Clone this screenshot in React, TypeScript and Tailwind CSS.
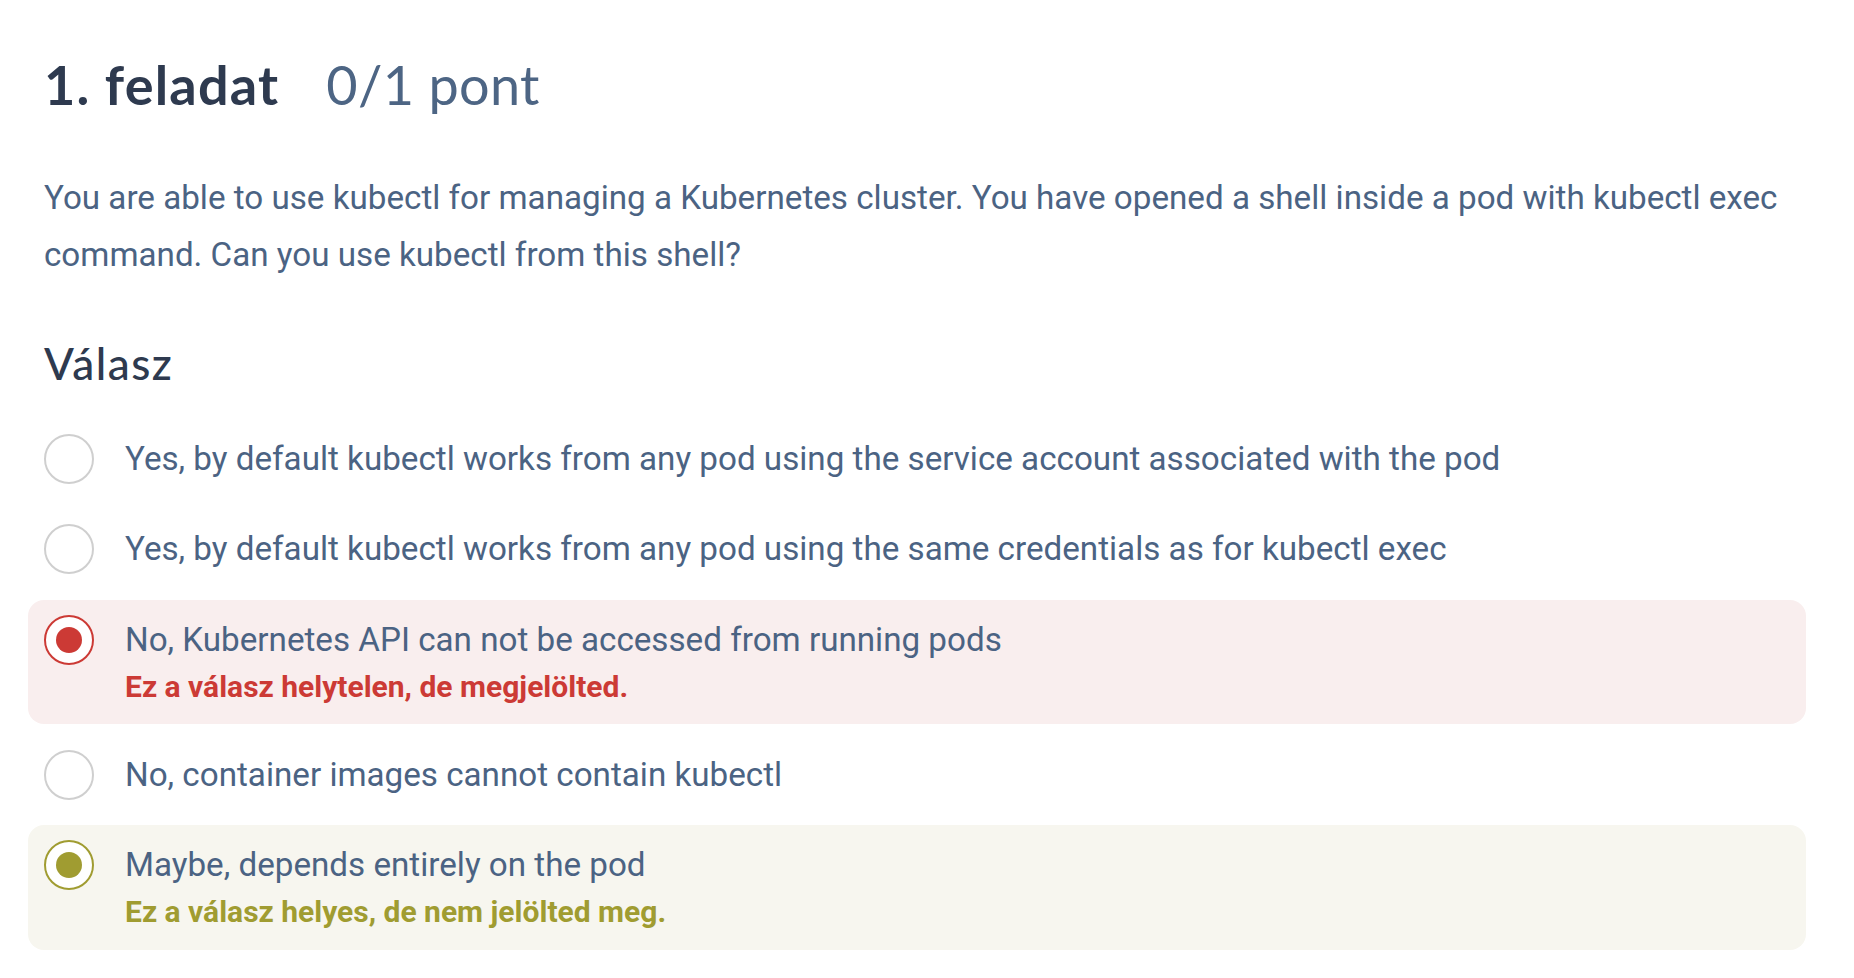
import React from "react";

type Opt = { text: string; state?: "wrong" | "missed" };

const options: Opt[] = [
  { text: "Yes, by default kubectl works from any pod using the service account associated with the pod" },
  { text: "Yes, by default kubectl works from any pod using the same credentials as for kubectl exec" },
  { text: "No, Kubernetes API can not be accessed from running pods", state: "wrong" },
  { text: "No, container images cannot contain kubectl" },
  { text: "Maybe, depends entirely on the pod", state: "missed" },
];

function Radio({ state }: { state?: "wrong" | "missed" }) {
  if (state === "wrong") {
    return (
      <div className="w-[50px] h-[50px] shrink-0 rounded-full border-2 border-[#cc3a35] bg-white flex items-center justify-center">
        <div className="w-[26px] h-[26px] rounded-full bg-[#cc3a35]" />
      </div>
    );
  }
  if (state === "missed") {
    return (
      <div className="w-[50px] h-[50px] shrink-0 rounded-full border-2 border-[#a09c31] bg-white flex items-center justify-center">
        <div className="w-[26px] h-[26px] rounded-full bg-[#a09c31]" />
      </div>
    );
  }
  return <div className="w-[50px] h-[50px] shrink-0 rounded-full border-2 border-[#cfcfcf] bg-white" />;
}

export default function App() {
  return (
    <div className="min-h-screen bg-white pl-[44px] pr-[64px] pt-[53px] font-['Roboto',sans-serif]">
      <h1 className="flex items-baseline text-[54px] leading-[1.2] font-['Lato',sans-serif]">
        <span className="font-bold text-[#2e3a4f] tracking-[1.2px]">1. feladat</span>
        <span className="ml-[47px] font-normal text-[#4d6584] tracking-[0.3px]">0/1 pont</span>
      </h1>
      <p className="mt-[51px] text-[33.2px] leading-[57px] text-[#4b6383]">
        You are able to use kubectl for managing a Kubernetes cluster. You have opened a shell inside a pod with kubectl exec command. Can you use kubectl from this shell?
      </p>
      <h2 className="mt-[54px] text-[44px] leading-[1.2] font-medium tracking-[1.5px] text-[#2e3a4f] font-['Lato',sans-serif]">Válasz</h2>
      <div className="mt-[29px] -ml-[16px] -mr-[16px] flex flex-col gap-[10.6px]">
        {options.map((o, i) => (
          <div
            key={i}
            className={
              "flex items-start gap-[31px] px-[16px] py-[15px] rounded-[16px] " +
              (o.state === "wrong" ? "bg-[#f9eeee]" : o.state === "missed" ? "bg-[#f7f6ef]" : "")
            }
          >
            <Radio state={o.state} />
            <div className="flex flex-col">
              <span className="text-[33.2px] leading-[50px] text-[#4b6383]">{o.text}</span>
              {o.state === "wrong" && (
                <span className="text-[30px] leading-[44.5px] font-bold text-[#cc3a35]">
                  Ez a válasz helytelen, de megjelölted.
                </span>
              )}
              {o.state === "missed" && (
                <span className="text-[30px] leading-[44.5px] font-bold text-[#a09c31]">
                  Ez a válasz helyes, de nem jelölted meg.
                </span>
              )}
            </div>
          </div>
        ))}
      </div>
    </div>
  );
}
